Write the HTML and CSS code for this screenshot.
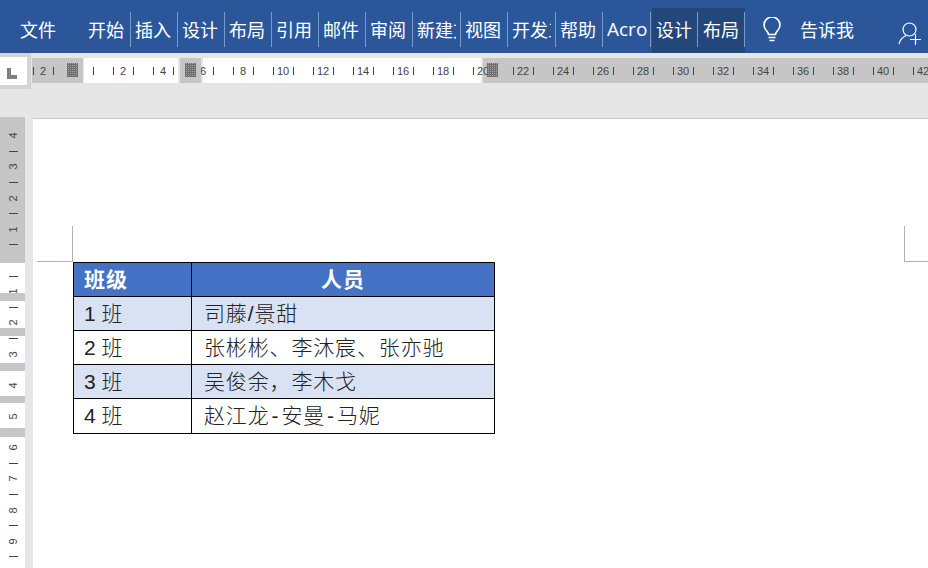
FILE: index.html
```html
<!DOCTYPE html>
<html lang="zh-CN">
<head>
<meta charset="utf-8">
<title>Word</title>
<link rel="stylesheet" href="styles.css">
</head>
<body>
<div class="app">
  <header class="ribbon">
    <div class="tab file">文件</div>
    <div class="tab"><span>开始</span></div>
    <div class="tab"><span>插入</span></div>
    <div class="tab"><span>设计</span></div>
    <div class="tab"><span>布局</span></div>
    <div class="tab"><span>引用</span></div>
    <div class="tab"><span>邮件</span></div>
    <div class="tab"><span>审阅</span></div>
    <div class="tab wide"><span>新建文</span></div>
    <div class="tab"><span>视图</span></div>
    <div class="tab wide"><span>开发工</span></div>
    <div class="tab"><span>帮助</span></div>
    <div class="tab wide"><span class="latin">Acrobat</span></div>
    <div class="context">
      <div class="tab narrow"><span>设计</span></div>
      <div class="tab"><span>布局</span></div>
    </div>
    <svg class="bulb" width="18" height="26" viewBox="0 0 18 26" fill="none" stroke="#fff" stroke-width="1.6">
      <path d="M5.5 17.5c0-3-4.5-4.5-4.5-9.5a8 8 0 0 1 16 0c0 5-4.500 6.500-4.500 9.500z"/>
      <path d="M5.500 20.500h7M6.500 23.500h5"/>
    </svg>
    <div class="tell">告诉我</div>
    <svg class="person" width="24" height="23" viewBox="0 0 24 23" fill="none" stroke="#fff" stroke-width="1.200">
      <circle cx="11.500" cy="7.500" r="6.500"/>
      <path d="M1 22c1-4 4-7 7-8.500"/>
      <path d="M17.500 12v11M12 17.500h11"/>
    </svg>
  </header>

  <div class="top-zone">
    <div class="corner"><i class="corner-l"></i></div>
    <div class="hruler">
      <span class="mark">2</span><span class="mark"></span><span class="mark"></span><span class="mark"></span>
      <span class="mark">2</span><span class="mark"></span><span class="mark">4</span><span class="mark"></span>
      <span class="mark">6</span><span class="mark"></span><span class="mark">8</span><span class="mark"></span>
      <span class="mark">10</span><span class="mark"></span><span class="mark">12</span><span class="mark"></span>
      <span class="mark">14</span><span class="mark"></span><span class="mark">16</span><span class="mark"></span>
      <span class="mark">18</span><span class="mark"></span><span class="mark">20</span><span class="mark"></span>
      <span class="mark">22</span><span class="mark"></span><span class="mark">24</span><span class="mark"></span>
      <span class="mark">26</span><span class="mark"></span><span class="mark">28</span><span class="mark"></span>
      <span class="mark">30</span><span class="mark"></span><span class="mark">32</span><span class="mark"></span>
      <span class="mark">34</span><span class="mark"></span><span class="mark">36</span><span class="mark"></span>
      <span class="mark">38</span><span class="mark"></span><span class="mark">40</span><span class="mark"></span>
      <span class="mark">42</span>
      <i class="handle handle-left"></i>
      <i class="handle handle-mid"></i>
      <i class="handle handle-right"></i>
    </div>
  </div>

  <main class="workspace">
    <aside class="vruler">
      <span class="vcell"><b>4</b></span><span class="vcell"><i></i></span>
      <span class="vcell"><b>3</b></span><span class="vcell"><i></i></span>
      <span class="vcell"><b>2</b></span><span class="vcell"><i></i></span>
      <span class="vcell"><b>1</b></span><span class="vcell"><i></i></span>
      <span class="vcell"></span><span class="vcell"><i></i></span>
      <span class="vcell"><b>1</b></span><span class="vcell"><i></i></span>
      <span class="vcell"><b>2</b></span><span class="vcell"><i></i></span>
      <span class="vcell"><b>3</b></span><span class="vcell"><i></i></span>
      <span class="vcell"><b>4</b></span><span class="vcell"><i></i></span>
      <span class="vcell"><b>5</b></span><span class="vcell"><i></i></span>
      <span class="vcell"><b>6</b></span><span class="vcell"><i></i></span>
      <span class="vcell"><b>7</b></span><span class="vcell"><i></i></span>
      <span class="vcell"><b>8</b></span><span class="vcell"><i></i></span>
      <span class="vcell"><b>9</b></span><span class="vcell"><i></i></span>
      <em class="band band-1"></em>
      <em class="band band-2"></em>
      <em class="band band-3"></em>
      <em class="band band-4"></em>
      <em class="band band-5"></em>
    </aside>
    <section class="page">
      <div class="crops">
        <i class="crop crop-left"></i>
        <i class="crop crop-right"></i>
      </div>
      <table class="roster">
        <thead>
          <tr><th class="col-a">班级</th><th class="col-b">人员</th></tr>
        </thead>
        <tbody>
          <tr class="alt"><td>1 班</td><td class="names">司藤/景甜</td></tr>
          <tr><td>2 班</td><td class="names">张彬彬、李沐宸、张亦驰</td></tr>
          <tr class="alt"><td>3 班</td><td class="names">吴俊余，李木戈</td></tr>
          <tr class="last"><td>4 班</td><td class="names">赵江龙<span class="dash">-</span>安曼<span class="dash">-</span>马妮</td></tr>
        </tbody>
      </table>
    </section>
  </main>
</div>
</body>
</html>
```
FILE: styles.css
```css
* { box-sizing: border-box; }
html, body { margin: 0; padding: 0; }
body { background: #e6e6e6; font-family: "Liberation Sans", "Noto Sans CJK SC", sans-serif; }
.app { width: 928px; height: 568px; overflow: hidden; display: flex; flex-direction: column; }

.ribbon { height: 53px; flex: none; background: #2b579a; display: flex; align-items: flex-start; color: #fff; font-family: "Noto Sans CJK SC", sans-serif; font-size: 18px; }
.tab { width: 47px; height: 35px; margin-top: 12px; line-height: 35px; padding-left: 4px; border-right: 1px solid #7a9bc9; white-space: nowrap; overflow: hidden; flex: none; }
.tab span { display: block; width: 39px; overflow: hidden; }
.tab.wide { width: 48px; }
.tab.narrow { width: 46px; padding-left: 4px; }
.tab.narrow + .tab { padding-left: 5px; }
.tab .latin { font-family: "Open Sans", sans-serif; font-size: 19px; width: 40px; }
.tab.file { width: 84px; padding-left: 20px; border-right: 0; }
.context { margin-top: 8px; margin-left: 1px; height: 45px; padding-top: 4px; background: #24477b; display: flex; flex: none; }
.context .tab { margin-top: 0; }
.bulb { margin: 17px 0 0 18px; flex: none; }
.tell { margin: 12px 0 0 19px; line-height: 35px; width: 56px; flex: none; }
.person { margin: 22px 0 0 42px; flex: none; }

.top-zone { height: 64px; flex: none; display: flex; align-items: flex-start; }
.corner { width: 31px; height: 36px; background: #fff; border: solid #d4d4d4; border-width: 4px 4px 4px 0; position: relative; flex: none; }
.corner-l { position: absolute; left: 7px; top: 11px; width: 10px; height: 11px; border-left: 4px solid #808080; border-bottom: 4px solid #808080; }
.hruler { position: relative; margin: 5px 0 0 1px; height: 25px; flex: 1; min-width: 0; padding-left: 1px; display: flex; align-items: center; overflow: hidden; color: #444; font-size: 11px;
  background: linear-gradient(90deg, #c6c6c6 0 50px, #e6e6e6 50px 52px, #fff 52px 146px, #e6e6e6 146px 148px, #c6c6c6 148px 169px, #e6e6e6 169px 171px, #fff 171px 449px, #e6e6e6 449px 451px, #c6c6c6 451px); }
.mark { width: 20px; height: 8px; line-height: 8px; flex: none; border-left: 1px solid #444; text-align: center; padding-right: 1px; white-space: nowrap; }
.handle { position: absolute; top: 0; height: 25px; background-color: #c6c6c6; }
.handle::after { content: ""; position: absolute; left: 5px; right: 5px; top: 5px; bottom: 6px;
  background-color: #a4a4a4;
  background-image: repeating-linear-gradient(90deg, #6e6e6e 0 1px, transparent 1px 2px), repeating-linear-gradient(0deg, #6e6e6e 0 1px, transparent 1px 2px); }
.handle-left { left: 30px; width: 21px; }
.handle-mid { left: 148px; width: 21px; }
.handle-right { left: 450px; width: 21px; background-color: transparent; }

.workspace { flex: 1; min-height: 0; display: flex; align-items: stretch; }
.vruler { position: relative; width: 25px; flex: none; padding-top: 11px; display: flex; flex-direction: column; overflow: hidden; color: #444; font-size: 11px;
  background: linear-gradient(180deg, #c6c6c6 0 146px, #fff 146px); }
.vcell { height: 15.6px; flex: none; display: flex; align-items: center; justify-content: center; padding-left: 2px; }
.vcell b { font-weight: 400; display: block; transform: rotate(-90deg); line-height: 11px; }
.vcell i { display: block; width: 9px; height: 1px; background: #444; }
.band { position: absolute; left: 0; right: 0; background: #c6c6c6; }
.band-1 { top: 176px; height: 8px; }
.band-2 { top: 211px; height: 8px; }
.band-3 { top: 246px; height: 8px; }
.band-4 { top: 279px; height: 7px; }
.band-5 { top: 311px; height: 9px; }

.page { flex: 1; min-width: 0; margin: 1px 0 0 8px; background: #fff; border-top: 1px solid #c6c6c6; padding-top: 107px; }
.crops { height: 36px; padding-left: 4px; display: flex; justify-content: space-between; }
.crop { display: block; height: 36px; border-bottom: 1px solid #b0b0b0; }
.crop-left { width: 36px; border-right: 1px solid #b0b0b0; }
.crop-right { width: 24px; border-left: 1px solid #b0b0b0; }

.roster { margin-left: 40px; width: 422px; border-collapse: collapse; table-layout: fixed; font-family: "Liberation Sans", "Noto Sans CJK SC", sans-serif; font-size: 21px; font-weight: 300; color: #222; }
.roster th, .roster td { border: 1px solid #000; height: 34px; padding: 0 0 0 10px; line-height: 30px; white-space: nowrap; overflow: hidden; }
.roster th { background: #4472c4; color: #fff; font-weight: 700; text-align: left; letter-spacing: 1px; }
.roster .col-a { width: 118px; }
.roster .col-b { text-align: center; padding: 0; }
.roster .alt td { background: #d9e2f3; }
.roster .last td { height: 35px; }
.roster .names { padding-left: 12px; letter-spacing: 0.85px; }
.dash { padding: 0 2px; }
```
